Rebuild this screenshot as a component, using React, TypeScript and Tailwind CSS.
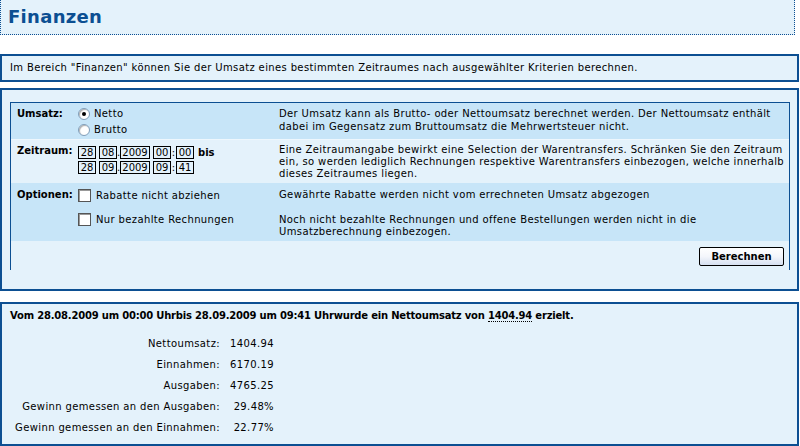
import React from 'react'

const border = 'border-[#0c4f92]'

function DateBox({ value, w = 'w-[18px]' }: { value: string; w?: string }) {
  return (
    <span className={`inline-flex h-[13px] ${w} items-center justify-center border border-black bg-[#e4f2fb] text-[10px] leading-none`}>
      {value}
    </span>
  )
}

function DateLine({ d, m, y, h, min, bis }: { d: string; m: string; y: string; h: string; min: string; bis?: boolean }) {
  return (
    <div className="flex h-[13px] items-center tracking-normal">
      <DateBox value={d} />
      <span className="w-[3px]" />
      <DateBox value={m} />
      <span className="w-[3px] text-center leading-none">.</span>
      <DateBox value={y} w="w-[30px]" />
      <span className="w-[3px]" />
      <DateBox value={h} />
      <span className="w-[5px] text-center leading-none">:</span>
      <DateBox value={min} />
      {bis && <span className="ml-[4px] font-bold">bis</span>}
    </div>
  )
}

function Radio({ checked }: { checked?: boolean }) {
  return (
    <span className="flex h-[12px] w-[12px] items-center justify-center rounded-full border border-[#7f9db9] bg-white shadow-[inset_1px_1px_1px_#b0b0b0]">
      {checked && <span className="h-[4px] w-[4px] rounded-full bg-black" />}
    </span>
  )
}

function Checkbox() {
  return <span className="block h-[13px] w-[13px] border border-[#555] bg-white shadow-[inset_1px_1px_0_#999]" />
}

const results = [
  ['Nettoumsatz:', '1404.94'],
  ['Einnahmen:', '6170.19'],
  ['Ausgaben:', '4765.25'],
  ['Gewinn gemessen an den Ausgaben:', '29.48%'],
  ['Gewinn gemessen an den Einnahmen:', '22.77%'],
]

export default function App() {
  return (
    <div className="h-[446px] w-[800px] overflow-hidden bg-white font-['DejaVu_Sans',Verdana,sans-serif] text-[10px] leading-[12px] tracking-[0.37px] text-black">
      {/* Kopfzeile */}
      <div className={`h-[35px] w-[795px] border-r border-b border-l border-dotted ${border} bg-[#e4f2fb] pl-[7px] pt-[7px]`}>
        <h1 className="text-[18px] leading-[20px] font-bold tracking-[0.3px] text-[#0c4f92]">Finanzen</h1>
      </div>

      {/* Hinweis */}
      <div className={`mt-[19px] flex h-[28px] w-[799px] items-center border-2 ${border} bg-[#e4f2fb] pl-[8px]`}>
        Im Bereich "Finanzen" können Sie der Umsatz eines bestimmten Zeitraumes nach ausgewählter Kriterien berechnen.
      </div>

      {/* Formular */}
      <div className={`mt-[6px] h-[203px] w-[799px] border-2 ${border} bg-[#e4f2fb] pt-[12px] pr-[7px] pl-[8px]`}>
        <div className={`border-t border-r border-l ${border}`}>
          <div className="grid h-[36px] grid-cols-[67px_201px_1fr] bg-[#c7e5f8]">
            <div className="pt-[5px] pl-[6px] font-bold tracking-normal">Umsatz:</div>
            <div className="flex flex-col gap-[4px] pt-[5px]">
              <div className="flex h-[12px] items-center gap-[4px]"><Radio checked />Netto</div>
              <div className="flex h-[12px] items-center gap-[4px]"><Radio />Brutto</div>
            </div>
            <div className="pt-[4px] leading-[13px]">
              Der Umsatz kann als Brutto- oder Nettoumsatz berechnet werden. Der Nettoumsatz enthält dabei im Gegensatz zum Bruttoumsatz die Mehrwertsteuer nicht.
            </div>
          </div>

          <div className="grid h-[44px] grid-cols-[67px_201px_1fr] border-t border-[#eef7fd] bg-[#e4f2fb]">
            <div className="pt-[5px] pl-[6px] font-bold tracking-normal">Zeitraum:</div>
            <div className="flex flex-col gap-[2px] pt-[6px]">
              <DateLine d="28" m="08" y="2009" h="00" min="00" bis />
              <DateLine d="28" m="09" y="2009" h="09" min="41" />
            </div>
            <div className="pt-[4px]">
              Eine Zeitraumangabe bewirkt eine Selection der Warentransfers. Schränken Sie den Zeitraum ein, so werden lediglich Rechnungen respektive Warentransfers einbezogen, welche innerhalb dieses Zeitraumes liegen.
            </div>
          </div>

          <div className="grid h-[58px] grid-cols-[67px_201px_1fr] bg-[#c7e5f8]">
            <div className="pt-[6px] pl-[6px] font-bold tracking-normal">Optionen:</div>
            <div className="flex flex-col gap-[11px] pt-[6px]">
              <div className="flex h-[13px] items-center gap-[5px]"><Checkbox />Rabatte nicht abziehen</div>
              <div className="flex h-[13px] items-center gap-[5px]"><Checkbox />Nur bezahlte Rechnungen</div>
            </div>
            <div className="pt-[6px]">
              <p>Gewährte Rabatte werden nicht vom errechneten Umsatz abgezogen</p>
              <p className="mt-[13px]">Noch nicht bezahlte Rechnungen und offene Bestellungen werden nicht in die Umsatzberechnung einbezogen.</p>
            </div>
          </div>

          <div className="flex h-[29px] justify-end pt-[6px] pr-[5px]">
            <button className="h-[19px] w-[85px] rounded-[2px] border border-black bg-gradient-to-b from-white via-[#f4f6fb] to-[#d6e0f0] text-[10px] font-bold leading-none tracking-normal">
              Berechnen
            </button>
          </div>
        </div>
      </div>

      {/* Ergebnis */}
      <div className={`mt-[11px] h-[144px] w-[799px] border-2 ${border} bg-[#e4f2fb] pt-[6px] pl-[8px]`}>
        <div className="font-bold tracking-[-0.2px]">
          Vom 28.08.2009 um 00:00 Uhrbis 28.09.2009 um 09:41 Uhrwurde ein Nettoumsatz von{' '}
          <span className="border-b border-dotted border-black">1404.94</span> erzielt.
        </div>
        <div className="mt-[11px] -ml-[6px]">
          {results.map(([label, value]) => (
            <div key={label} className="flex h-[21px] items-center">
              <span className="w-[216px] text-right">{label}</span>
              <span className="w-[54px] text-right">{value}</span>
            </div>
          ))}
        </div>
      </div>
    </div>
  )
}
